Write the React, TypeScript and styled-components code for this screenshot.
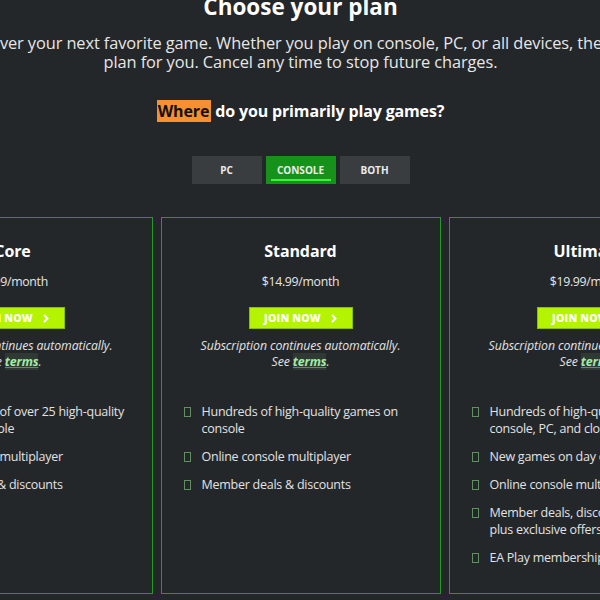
import React from "react";
import styled, { createGlobalStyle } from "styled-components";

const Global = createGlobalStyle`
  html, body { margin: 0; padding: 0; background: #24272a; overflow: hidden; }
  body { font-family: "Open Sans", "Noto Sans", sans-serif; color: #e4e4e4; }
`;

const Page = styled.div`
  display: flex;
  justify-content: center;
  width: 600px;
  height: 600px;
  overflow: hidden;
`;

const Inner = styled.div`
  flex-shrink: 0;
  width: 856px;
  display: flex;
  flex-direction: column;
  align-items: center;
  margin-top: -8px;
  margin-left: 1px;
`;

const Title = styled.h1`
  margin: 0;
  font-size: 22.5px;
  line-height: 30px;
  font-weight: 700;
  color: #ffffff;
`;

const Sub = styled.p`
  margin: 11px 0 0;
  text-align: center;
  white-space: nowrap;
  font-size: 16.4px;
  letter-spacing: -0.1px;
  line-height: 19px;
  color: #e6e6e6;
`;

const Question = styled.h2`
  margin: 29px 0 0;
  font-size: 16px;
  letter-spacing: -0.15px;
  line-height: 22px;
  font-weight: 700;
  color: #ffffff;
`;

const Mark = styled.span`
  background: #f7902e;
  color: #111;
  padding: 0 2px 0 1px;
`;

const Tabs = styled.div`
  display: flex;
  gap: 4px;
  margin-top: 34px;
`;

const Tab = styled.button<{ $active?: boolean }>`
  position: relative;
  width: 70px;
  height: 28px;
  border: none;
  padding: 0;
  font-family: inherit;
  font-size: 10px;
  font-weight: 700;
  color: #ececec;
  background: ${(p) => (p.$active ? "#16911a" : "#3a3d40")};
  &::after {
    content: "";
    display: ${(p) => (p.$active ? "block" : "none")};
    position: absolute;
    left: 5px;
    right: 5px;
    bottom: 3px;
    height: 2px;
    background: #3ef03e;
  }
`;

const Cards = styled.div`
  display: grid;
  grid-template-columns: repeat(3, 280px);
  gap: 8px;
  margin-top: 33px;
`;

const Card = styled.div`
  height: 377px;
  box-sizing: border-box;
  border: 1px solid #1f9e22;
  padding: 23px 22px 0;
  display: flex;
  flex-direction: column;
  align-items: center;
`;

const PlanName = styled.h3`
  margin: 0;
  font-size: 16px;
  letter-spacing: -0.1px;
  line-height: 20px;
  font-weight: 700;
  color: #fff;
`;

const Price = styled.div`
  margin-top: 12px;
  font-size: 12.3px;
  letter-spacing: -0.3px;
  line-height: 18px;
  color: #e6e6e6;
`;

const Join = styled.button`
  margin-top: 16px;
  width: 104px;
  height: 22px;
  background: #b5f400;
  border: 1px solid #8cbf00;
  color: #fff;
  font-family: inherit;
  font-weight: 800;
  font-size: 10.5px;
  letter-spacing: 0.2px;
  display: flex;
  align-items: center;
  justify-content: center;
  gap: 10px;
  padding: 0;
`;

const Note = styled.p`
  margin: 9px 0 0;
  font-style: italic;
  font-size: 12.3px;
  letter-spacing: -0.1px;
  line-height: 16px;
  text-align: center;
  color: #e2e2e2;
`;

const Terms = styled.a`
  color: #a6eaa6;
  font-weight: 700;
  text-decoration: underline;
  text-decoration-color: #5c8f5c;
  background: rgba(120, 200, 120, 0.12);
`;

const Features = styled.ul`
  list-style: none;
  margin: 33px -4px 0 0;
  padding: 0;
  align-self: stretch;
  display: flex;
  flex-direction: column;
  gap: 11px;
`;

const Feature = styled.li`
  display: flex;
  align-items: flex-start;
  gap: 11px;
  font-size: 12.5px;
  letter-spacing: -0.25px;
  line-height: 17px;
  color: #e2e2e2;
`;

const Box = styled.span`
  flex-shrink: 0;
  width: 5px;
  height: 8px;
  margin-top: 4px;
  border: 1px solid #628f62;
`;

const Chevron = () => (
  <svg width="6" height="9" viewBox="0 0 6 9">
    <path d="M1 1l3.5 3.5L1 8" fill="none" stroke="#fff" strokeWidth="2" />
  </svg>
);

const plans = [
  {
    name: "Core",
    price: "$9.99/month",
    features: [
      "Enjoy a catalog of over 25 high-quality games on console",
      "Online console multiplayer",
      "Member deals & discounts",
    ],
  },
  {
    name: "Standard",
    price: "$14.99/month",
    features: [
      "Hundreds of high-quality games on console",
      "Online console multiplayer",
      "Member deals & discounts",
    ],
  },
  {
    name: "Ultimate",
    price: "$19.99/month",
    features: [
      "Hundreds of high-quality games on console, PC, and cloud",
      "New games on day one",
      "Online console multiplayer",
      "Member deals, discounts, and perks, plus exclusive offers",
      "EA Play membership",
    ],
  },
];

export default function App() {
  return (
    <>
      <Global />
      <Page>
        <Inner>
          <Title>Choose your plan</Title>
          <Sub>
            Discover your next favorite game. Whether you play on console, PC, or all devices, there's a
            <br />
            plan for you. Cancel any time to stop future charges.
          </Sub>
          <Question>
            <Mark>Where</Mark> do you primarily play games?
          </Question>
          <Tabs>
            <Tab>PC</Tab>
            <Tab $active>CONSOLE</Tab>
            <Tab>BOTH</Tab>
          </Tabs>
          <Cards>
            {plans.map((p) => (
              <Card key={p.name}>
                <PlanName>{p.name}</PlanName>
                <Price>{p.price}</Price>
                <Join>
                  JOIN NOW <Chevron />
                </Join>
                <Note>
                  Subscription continues automatically.
                  <br />
                  See <Terms>terms</Terms>.
                </Note>
                <Features>
                  {p.features.map((f) => (
                    <Feature key={f}>
                      <Box />
                      <span>{f}</span>
                    </Feature>
                  ))}
                </Features>
              </Card>
            ))}
          </Cards>
        </Inner>
      </Page>
    </>
  );
}
